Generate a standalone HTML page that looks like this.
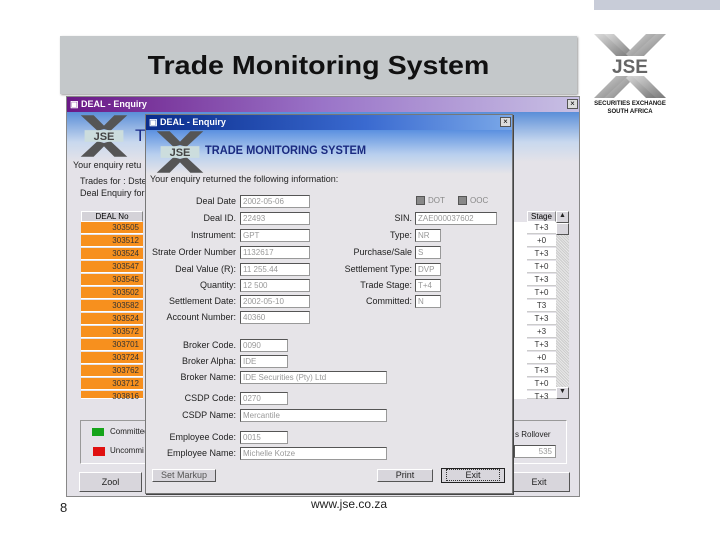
<!DOCTYPE html>
<html><head><meta charset="utf-8"><style>
*{margin:0;padding:0;box-sizing:border-box}
body{width:720px;height:540px;background:#fff;position:relative;overflow:hidden;font-family:"Liberation Sans",sans-serif}
.a{position:absolute}
.t{font-size:9px;color:#222;white-space:nowrap}
.lab{position:absolute;font-size:9px;color:#222;text-align:right;white-space:nowrap}
.inp{position:absolute;height:13px;background:#fff;border:1px solid #999;border-top-color:#555;border-left-color:#555;font-size:8px;color:#999;padding-left:2px;line-height:11px;white-space:nowrap;overflow:hidden}
.or{position:absolute;left:81px;width:62px;height:12px;background:#f7901e;font-size:8px;color:#333;text-align:right;padding-right:4px;line-height:12px;border-bottom:1px solid #fff}
.st{position:absolute;left:527px;width:29px;height:12px;background:#fff;font-size:8px;color:#333;text-align:center;line-height:12px;border-bottom:1px solid #ccc}
.btn{position:absolute;background:#d8d6dc;border:1px solid #fff;border-right-color:#555;border-bottom-color:#555;font-size:9px;color:#222;text-align:center}
</style></head><body>
<div class="a" style="left:594px;top:0;width:126px;height:10px;background:#c8ccd8"></div>
<div class="a" style="left:60px;top:36px;width:517px;height:58px;background:#c4c8ca;box-shadow:1px 1px 2px #999"></div>
<div class="a" style="left:60px;top:50px;width:517px;text-align:center;font-size:26px;font-weight:bold;color:#111;transform:scaleX(1.1)">Trade Monitoring System</div>

<!-- JSE logo right -->
<svg class="a" style="left:590px;top:32px" width="80" height="68" viewBox="0 0 80 68">
<defs><linearGradient id="g" x1="0" y1="0" x2="1" y2="1"><stop offset="0" stop-color="#ddd"/><stop offset="1" stop-color="#777"/></linearGradient></defs>
<g fill="url(#g)">
<polygon points="4,2 16,2 40,26 28,26"/><polygon points="14,2 24,2 44,22 40,26"/>
<polygon points="76,2 64,2 40,26 52,26"/><polygon points="66,2 56,2 36,22 40,26"/>
<polygon points="4,66 16,66 40,42 28,42"/><polygon points="14,66 24,66 44,46 40,42"/>
<polygon points="76,66 64,66 40,42 52,42"/><polygon points="66,66 56,66 36,46 40,42"/>
</g>
<rect x="10" y="24" width="60" height="20" fill="#fff"/>
<text x="40" y="41" text-anchor="middle" font-family="Liberation Sans" font-weight="bold" font-size="19" fill="#666">JSE</text>
</svg>
<div class="a" style="left:590px;top:101px;width:80px;text-align:center;font-size:6px;font-weight:bold;color:#111">SECURITIES EXCHANGE</div>
<div class="a" style="left:590px;top:109px;width:80px;text-align:center;font-size:6px;font-weight:bold;color:#111">SOUTH AFRICA</div>

<!-- back window -->
<div class="a" style="left:66px;top:96px;width:514px;height:401px;background:#e4e2e8;border:1px solid #888"></div>
<div class="a" style="left:67px;top:97px;width:512px;height:15px;background:linear-gradient(90deg,#6a1886,#9a74c8 50%,#c8c0e4)"></div>
<div class="a t" style="left:70px;top:99px;color:#fff;font-weight:bold">▣ DEAL - Enquiry</div>
<div class="a" style="left:567px;top:99px;width:11px;height:10px;background:#ddd;border:1px solid #555;font-size:8px;line-height:8px;text-align:center">×</div>
<div class="a" style="left:67px;top:112px;width:512px;height:50px;background:linear-gradient(180deg,#5a8ed8,#c8d8ee 60%,#e4e2e8)"></div>
<svg class="a" style="left:74px;top:114px" width="60" height="44" viewBox="0 0 80 68"><g fill="#555"><polygon points="4,2 24,2 44,22 30,26"/><polygon points="76,2 56,2 36,22 50,26"/><polygon points="4,66 24,66 44,46 30,42"/><polygon points="76,66 56,66 36,46 50,42"/></g><rect x="10" y="25" width="60" height="18" fill="#cdd"/><text x="40" y="40" text-anchor="middle" font-family="Liberation Sans" font-weight="bold" font-size="17" fill="#444">JSE</text></svg>
<div class="a" style="left:135px;top:126px;font-size:17px;color:#1a2a88">T</div>
<div class="a t" style="left:73px;top:160px">Your enquiry retu</div>
<div class="a t" style="left:80px;top:176px">Trades for : Dste</div>
<div class="a t" style="left:80px;top:188px">Deal Enquiry for</div>
<div class="a" style="left:81px;top:211px;width:62px;height:11px;background:#d4d2d8;border:1px solid #fff;border-right-color:#888;font-size:8px;text-align:center;line-height:9px">DEAL No</div>
<div class="or" style="top:222px">303505</div><div class="or" style="top:235px">303512</div><div class="or" style="top:248px">303524</div><div class="or" style="top:261px">303547</div><div class="or" style="top:274px">303545</div><div class="or" style="top:287px">303502</div><div class="or" style="top:300px">303582</div><div class="or" style="top:313px">303524</div><div class="or" style="top:326px">303572</div><div class="or" style="top:339px">303701</div><div class="or" style="top:352px">303724</div><div class="or" style="top:365px">303762</div><div class="or" style="top:378px">303712</div><div class="or" style="top:391px;height:8px">303816</div>
<div class="a" style="left:512px;top:222px;width:15px;height:177px;background:#fff"></div>
<div class="a" style="left:527px;top:211px;width:29px;height:11px;background:#d4d2d8;border:1px solid #fff;border-right-color:#888;font-size:8px;text-align:center;line-height:9px">Stage</div>
<div class="st" style="top:222px">T+3</div><div class="st" style="top:235px">+0</div><div class="st" style="top:248px">T+3</div><div class="st" style="top:261px">T+0</div><div class="st" style="top:274px">T+3</div><div class="st" style="top:287px">T+0</div><div class="st" style="top:300px">T3</div><div class="st" style="top:313px">T+3</div><div class="st" style="top:326px">+3</div><div class="st" style="top:339px">T+3</div><div class="st" style="top:352px">+0</div><div class="st" style="top:365px">T+3</div><div class="st" style="top:378px">T+0</div><div class="st" style="top:391px;height:8px">T+3</div>
<div class="a" style="left:556px;top:211px;width:13px;height:188px;background:repeating-linear-gradient(45deg,#e8e8e8 0 1px,#ccc 1px 2px)"></div>
<div class="btn" style="left:556px;top:211px;width:13px;height:12px;font-size:7px">▲</div>
<div class="btn" style="left:556px;top:223px;width:13px;height:12px"></div>
<div class="btn" style="left:556px;top:387px;width:13px;height:12px;font-size:7px">▼</div>
<div class="a" style="left:80px;top:420px;width:487px;height:44px;border:1px solid #999;border-right-color:#fff;border-bottom-color:#fff"></div>
<div class="a" style="left:92px;top:428px;width:12px;height:8px;background:#16a41a"></div>
<div class="a t" style="left:110px;top:427px;font-size:8px">Committed</div>
<div class="a" style="left:93px;top:447px;width:12px;height:9px;background:#e01010"></div>
<div class="a t" style="left:110px;top:446px;font-size:8px">Uncommi</div>
<div class="a t" style="left:515px;top:430px;font-size:8px">s Rollover</div>
<div class="inp" style="left:514px;top:445px;width:42px;text-align:right;padding-right:3px">535</div>
<div class="btn" style="left:79px;top:472px;width:63px;height:20px;line-height:18px">Zool</div>
<div class="btn" style="left:508px;top:472px;width:62px;height:20px;line-height:18px">Exit</div>

<!-- front window -->
<div class="a" style="left:145px;top:114px;width:368px;height:380px;background:#e6e4e8;border:1px solid #777;box-shadow:1px 1px 0 #444"></div>
<div class="a" style="left:146px;top:115px;width:366px;height:15px;background:linear-gradient(90deg,#0a2c8c,#3a6ad0 60%,#7aa8e8)"></div>
<div class="a t" style="left:149px;top:117px;color:#fff;font-weight:bold">▣ DEAL - Enquiry</div>
<div class="a" style="left:500px;top:117px;width:11px;height:10px;background:#ddd;border:1px solid #555;font-size:8px;line-height:8px;text-align:center">×</div>
<div class="a" style="left:146px;top:130px;width:366px;height:44px;background:linear-gradient(180deg,#5a90e0,#b8cfee 55%,#e6e4e8)"></div>
<svg class="a" style="left:150px;top:130px" width="60" height="44" viewBox="0 0 80 68"><g fill="#555"><polygon points="4,2 24,2 44,22 30,26"/><polygon points="76,2 56,2 36,22 50,26"/><polygon points="4,66 24,66 44,46 30,42"/><polygon points="76,66 56,66 36,46 50,42"/></g><rect x="10" y="25" width="60" height="18" fill="#cdd"/><text x="40" y="40" text-anchor="middle" font-family="Liberation Sans" font-weight="bold" font-size="17" fill="#444">JSE</text></svg>
<div class="a" style="left:205px;top:143px;font-size:12px;font-weight:bold;color:#1a2a80;transform:scaleX(0.92);transform-origin:left">TRADE MONITORING SYSTEM</div>
<div class="a t" style="left:150px;top:174px">Your enquiry returned the following information:</div>

<div class="lab" style="right:484px;top:196px">Deal Date</div><div class="inp" style="left:240px;top:195px;width:70px">2002-05-06</div>
<div class="lab" style="right:484px;top:213px">Deal ID.</div><div class="inp" style="left:240px;top:212px;width:70px">22493</div>
<div class="lab" style="right:484px;top:230px">Instrument:</div><div class="inp" style="left:240px;top:229px;width:70px">GPT</div>
<div class="lab" style="right:484px;top:247px">Strate Order Number</div><div class="inp" style="left:240px;top:246px;width:70px">1132617</div>
<div class="lab" style="right:484px;top:264px">Deal Value (R):</div><div class="inp" style="left:240px;top:263px;width:70px">11 255.44</div>
<div class="lab" style="right:484px;top:280px">Quantity:</div><div class="inp" style="left:240px;top:279px;width:70px">12 500</div>
<div class="lab" style="right:484px;top:296px">Settlement Date:</div><div class="inp" style="left:240px;top:295px;width:70px">2002-05-10</div>
<div class="lab" style="right:484px;top:312px">Account Number:</div><div class="inp" style="left:240px;top:311px;width:70px">40360</div>

<div class="a" style="left:416px;top:196px;width:9px;height:9px;background:#888;border:1px solid #555"></div><div class="a t" style="left:428px;top:196px;font-size:8px;color:#888">DOT</div>
<div class="a" style="left:458px;top:196px;width:9px;height:9px;background:#888;border:1px solid #555"></div><div class="a t" style="left:470px;top:196px;font-size:8px;color:#888">OOC</div>
<div class="lab" style="right:308px;top:213px">SIN.</div><div class="inp" style="left:415px;top:212px;width:82px">ZAE000037602</div>
<div class="lab" style="right:308px;top:230px">Type:</div><div class="inp" style="left:415px;top:229px;width:26px">NR</div>
<div class="lab" style="right:308px;top:247px">Purchase/Sale</div><div class="inp" style="left:415px;top:246px;width:26px">S</div>
<div class="lab" style="right:308px;top:264px">Settlement Type:</div><div class="inp" style="left:415px;top:263px;width:26px">DVP</div>
<div class="lab" style="right:308px;top:280px">Trade Stage:</div><div class="inp" style="left:415px;top:279px;width:26px">T+4</div>
<div class="lab" style="right:308px;top:296px">Committed:</div><div class="inp" style="left:415px;top:295px;width:26px">N</div>

<div class="lab" style="right:484px;top:340px">Broker Code.</div><div class="inp" style="left:240px;top:339px;width:48px">0090</div>
<div class="lab" style="right:484px;top:356px">Broker Alpha:</div><div class="inp" style="left:240px;top:355px;width:48px">IDE</div>
<div class="lab" style="right:484px;top:372px">Broker Name:</div><div class="inp" style="left:240px;top:371px;width:147px">IDE Securities (Pty) Ltd</div>
<div class="lab" style="right:484px;top:393px">CSDP Code:</div><div class="inp" style="left:240px;top:392px;width:48px">0270</div>
<div class="lab" style="right:484px;top:410px">CSDP Name:</div><div class="inp" style="left:240px;top:409px;width:147px">Mercantile</div>
<div class="lab" style="right:484px;top:432px">Employee Code:</div><div class="inp" style="left:240px;top:431px;width:48px">0015</div>
<div class="lab" style="right:484px;top:448px">Employee Name:</div><div class="inp" style="left:240px;top:447px;width:147px">Michelle Kotze</div>

<div class="btn" style="left:152px;top:469px;width:64px;height:13px;line-height:11px;color:#555">Set Markup</div>
<div class="btn" style="left:377px;top:469px;width:56px;height:13px;line-height:11px">Print</div>
<div class="btn" style="left:441px;top:468px;width:64px;height:15px;line-height:12px;border:1px solid #222"><span style="border:1px dotted #333;padding:0 18px">Exit</span></div>

<div class="a" style="left:60px;top:500px;font-size:13px;color:#222">8</div>
<div class="a" style="left:311px;top:497px;font-size:12px;color:#222">www.jse.co.za</div>
</body></html>
